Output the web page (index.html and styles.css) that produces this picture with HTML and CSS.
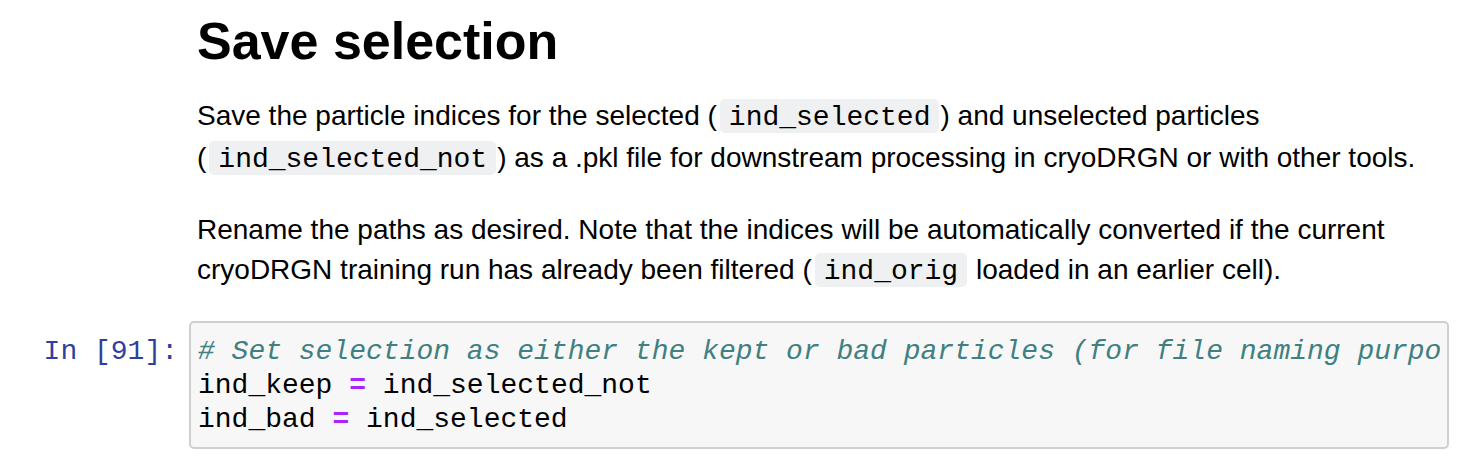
FILE: index.html
```html
<!DOCTYPE html>
<html lang="en">
<head>
<meta charset="utf-8">
<title>Save selection</title>
<link rel="stylesheet" href="styles.css">
</head>
<body>
<div class="notebook">
  <div class="cell text-cell">
    <div class="prompt"></div>
    <div class="rendered">
      <h1>Save selection</h1>
      <p>Save the particle indices for the selected (<code>ind_selected</code>) and unselected particles (<code>ind_selected_not</code>) as a .pkl file for downstream processing in cryoDRGN or with other tools.</p>
      <p>Rename the paths as desired. Note that the indices will be automatically converted if the current cryoDRGN training run has already been filtered (<code>ind_orig</code> loaded in an earlier cell).</p>
    </div>
  </div>
  <div class="cell code-cell">
    <div class="prompt in-prompt">In&nbsp;[91]:</div>
    <div class="input-area"><pre class="code"><span class="cm-comment"># Set selection as either the kept or bad particles (for file naming purposes)</span>
ind_keep <span class="cm-op">=</span> ind_selected_not
ind_bad <span class="cm-op">=</span> ind_selected</pre></div>
  </div>
</div>
</body>
</html>
```

FILE: styles.css
```css
html, body {
  margin: 0;
  padding: 0;
  background: #ffffff;
}

body {
  font-family: "Liberation Sans", Arial, Helvetica, sans-serif;
  color: #000000;
  width: 1476px;
  overflow: hidden;
}

.notebook {
  padding: 15px 27px 0 0;
}

.cell {
  display: grid;
  grid-template-columns: 189px 1fr;
}

.rendered {
  padding-left: 8px;
  min-width: 0;
}

.rendered h1 {
  margin: 0;
  font-size: 52px;
  line-height: 52px;
  font-weight: bold;
}

.rendered p {
  margin: 29px 0 0 0;
  font-size: 28px;
  line-height: 40px;
}

.rendered p + p {
  margin-top: 30px;
}

.rendered code {
  font-family: "Liberation Mono", "Courier New", monospace;
  font-size: 28px;
  background: #eff0f1;
  border-radius: 5px;
  padding: 3px 9px 0;
  margin: 0 1px 0 3px;
}

.code-cell {
  margin-top: 29px;
}

.in-prompt {
  font-family: "Liberation Mono", "Courier New", monospace;
  font-size: 28px;
  line-height: 34px;
  color: #303f9f;
  text-align: right;
  padding: 14px 11px 0 0;
  white-space: nowrap;
}

.input-area {
  border: 2px solid #cfcfcf;
  border-radius: 5px;
  background: #f7f7f7;
  padding: 12px 7px 10px;
  overflow: hidden;
  min-width: 0;
}

.code {
  margin: 0;
  font-family: "Liberation Mono", "Courier New", monospace;
  font-size: 28px;
  line-height: 34px;
  color: #000000;
  white-space: pre;
  overflow: hidden;
}

.cm-comment {
  color: #408080;
  font-style: italic;
}

.cm-op {
  color: #aa22ff;
  font-weight: bold;
}
```
